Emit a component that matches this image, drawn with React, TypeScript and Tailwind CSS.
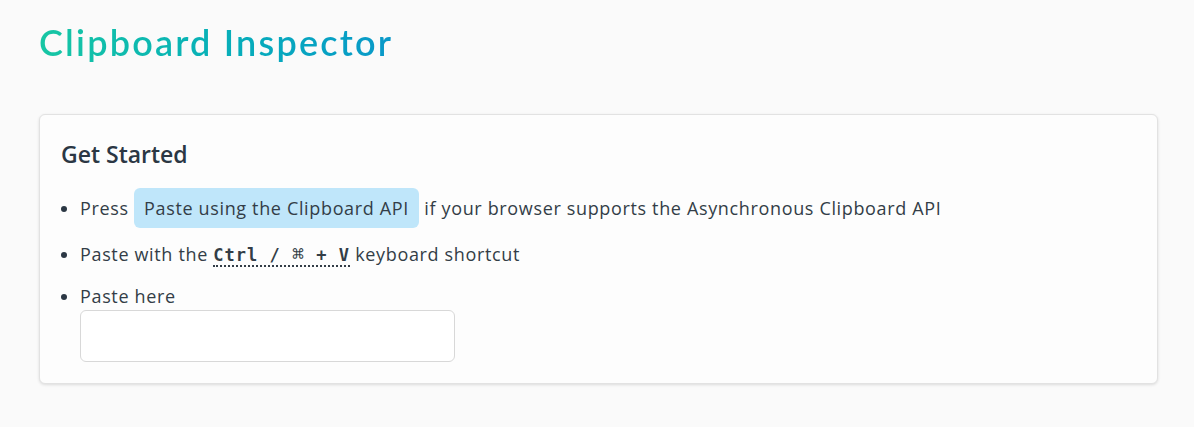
export default function App() {
  return (
    <div className="min-h-[427px] bg-[#fafafa] pl-[39px] pr-[36px] pt-[18px] text-[#333d47]" style={{ fontFamily: '"Open Sans", sans-serif' }}>
      <h1
        className="inline-block bg-gradient-to-r from-[#17c6a3] to-[#0a98c9] bg-clip-text text-[36px] font-semibold leading-[48px] tracking-[2.2px] text-transparent"
        style={{ fontFamily: 'Lato, sans-serif' }}
      >
        Clipboard Inspector
      </h1>
      <div className="mt-[48px] rounded-md border border-[#e2e2e2] bg-[#fdfdfd] px-[21px] pt-[23px] pb-[21px] shadow-[0_1px_3px_rgba(0,0,0,0.12)]">
        <h2 className="text-[23px] font-semibold leading-[32px] text-[#2b3744]">Get Started</h2>
        <ul className="mt-[18px] list-disc pl-[19px] text-[18px] leading-[26px] tracking-[0.65px] marker:text-[#2b3744]">
          <li className="mb-[13px]">
            Press{" "}
            <button className="rounded-md bg-[#bfe6fa] px-[10px] py-[7px] leading-[26px] tracking-[0.65px]">
              Paste using the Clipboard API
            </button>{" "}
            if your browser supports the Asynchronous Clipboard API
          </li>
          <li className="mb-[15px]">
            Paste with the{" "}
            <abbr
              className="font-bold no-underline border-b-2 border-dotted border-[#333d47] tracking-[1px]"
              style={{ fontFamily: '"DejaVu Sans Mono", monospace', fontSize: '17px' }}
              title="Ctrl + V or Cmd + V"
            >
              Ctrl / <span className="text-[20px] font-normal leading-none">⌘</span> + V
            </abbr>{" "}
            keyboard shortcut
          </li>
          <li>
            Paste here
            <div className="mt-[1px] h-[52px] w-[375px] rounded-md border border-[#d8d8d8] bg-white" />
          </li>
        </ul>
      </div>
    </div>
  )
}
